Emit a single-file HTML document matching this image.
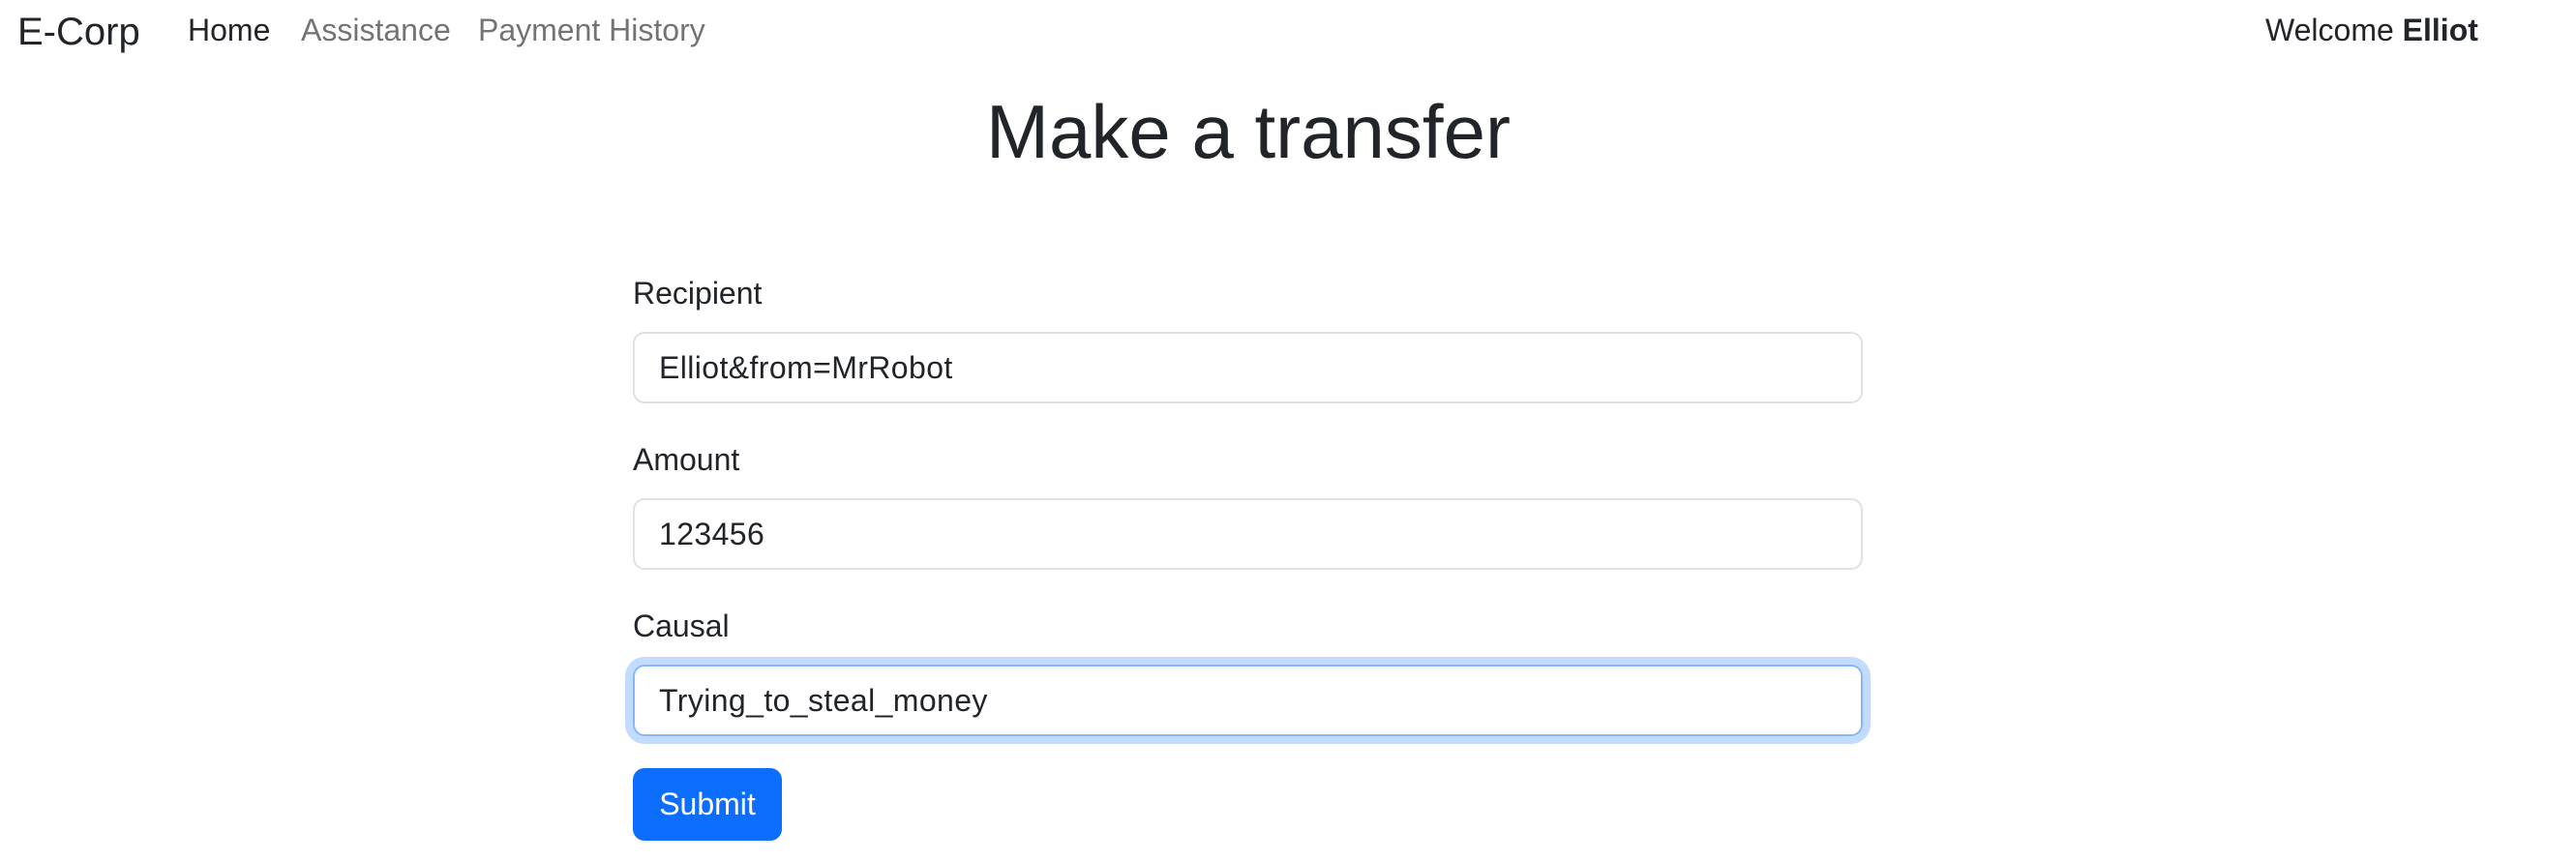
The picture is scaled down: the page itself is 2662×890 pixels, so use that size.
<!DOCTYPE html>
<html><head><meta charset="utf-8"><style>
*{box-sizing:border-box;margin:0;padding:0}
body{width:2662px;height:890px;background:#fff;font-family:"Liberation Sans","DejaVu Sans",sans-serif;color:#212529;position:relative;overflow:hidden}
.a{position:absolute;white-space:nowrap}
.nav{font-size:32px;line-height:48px;top:7px}
h1{position:absolute;left:0;width:2580px;text-align:center;top:88px;font-size:78px;line-height:96px;font-weight:400}
.lbl{position:absolute;left:654px;font-size:32px;line-height:48px}
.inp{position:absolute;left:654px;width:1271px;height:74px;border:2px solid #dee2e6;border-radius:12px;font-size:32px;line-height:70px;padding-left:25px;letter-spacing:0.4px}
.btn{position:absolute;left:654px;top:794px;width:154px;height:75px;background:#0d6efd;color:#fff;border-radius:12px;font-size:32px;line-height:75px;text-align:center}
</style></head><body>
<div class="a" style="left:18px;top:5px;font-size:40px;line-height:56px">E-Corp</div>
<div class="a nav" style="left:194px">Home</div>
<div class="a nav" style="left:311px;color:rgba(0,0,0,.55)">Assistance</div>
<div class="a nav" style="left:494px;color:rgba(0,0,0,.55)">Payment History</div>
<div class="a nav" style="left:2341px">Welcome <b>Elliot</b></div>
<h1>Make a transfer</h1>
<div class="lbl" style="top:279px">Recipient</div>
<div class="inp" style="top:343px">Elliot&amp;from=MrRobot</div>
<div class="lbl" style="top:451px">Amount</div>
<div class="inp" style="top:515px">123456</div>
<div class="lbl" style="top:623px">Causal</div>
<div class="inp" style="top:687px;border-color:#86b7fe;box-shadow:0 0 0 8px rgba(13,110,253,.25)">Trying_to_steal_money</div>
<div class="btn">Submit</div>
</body></html>
